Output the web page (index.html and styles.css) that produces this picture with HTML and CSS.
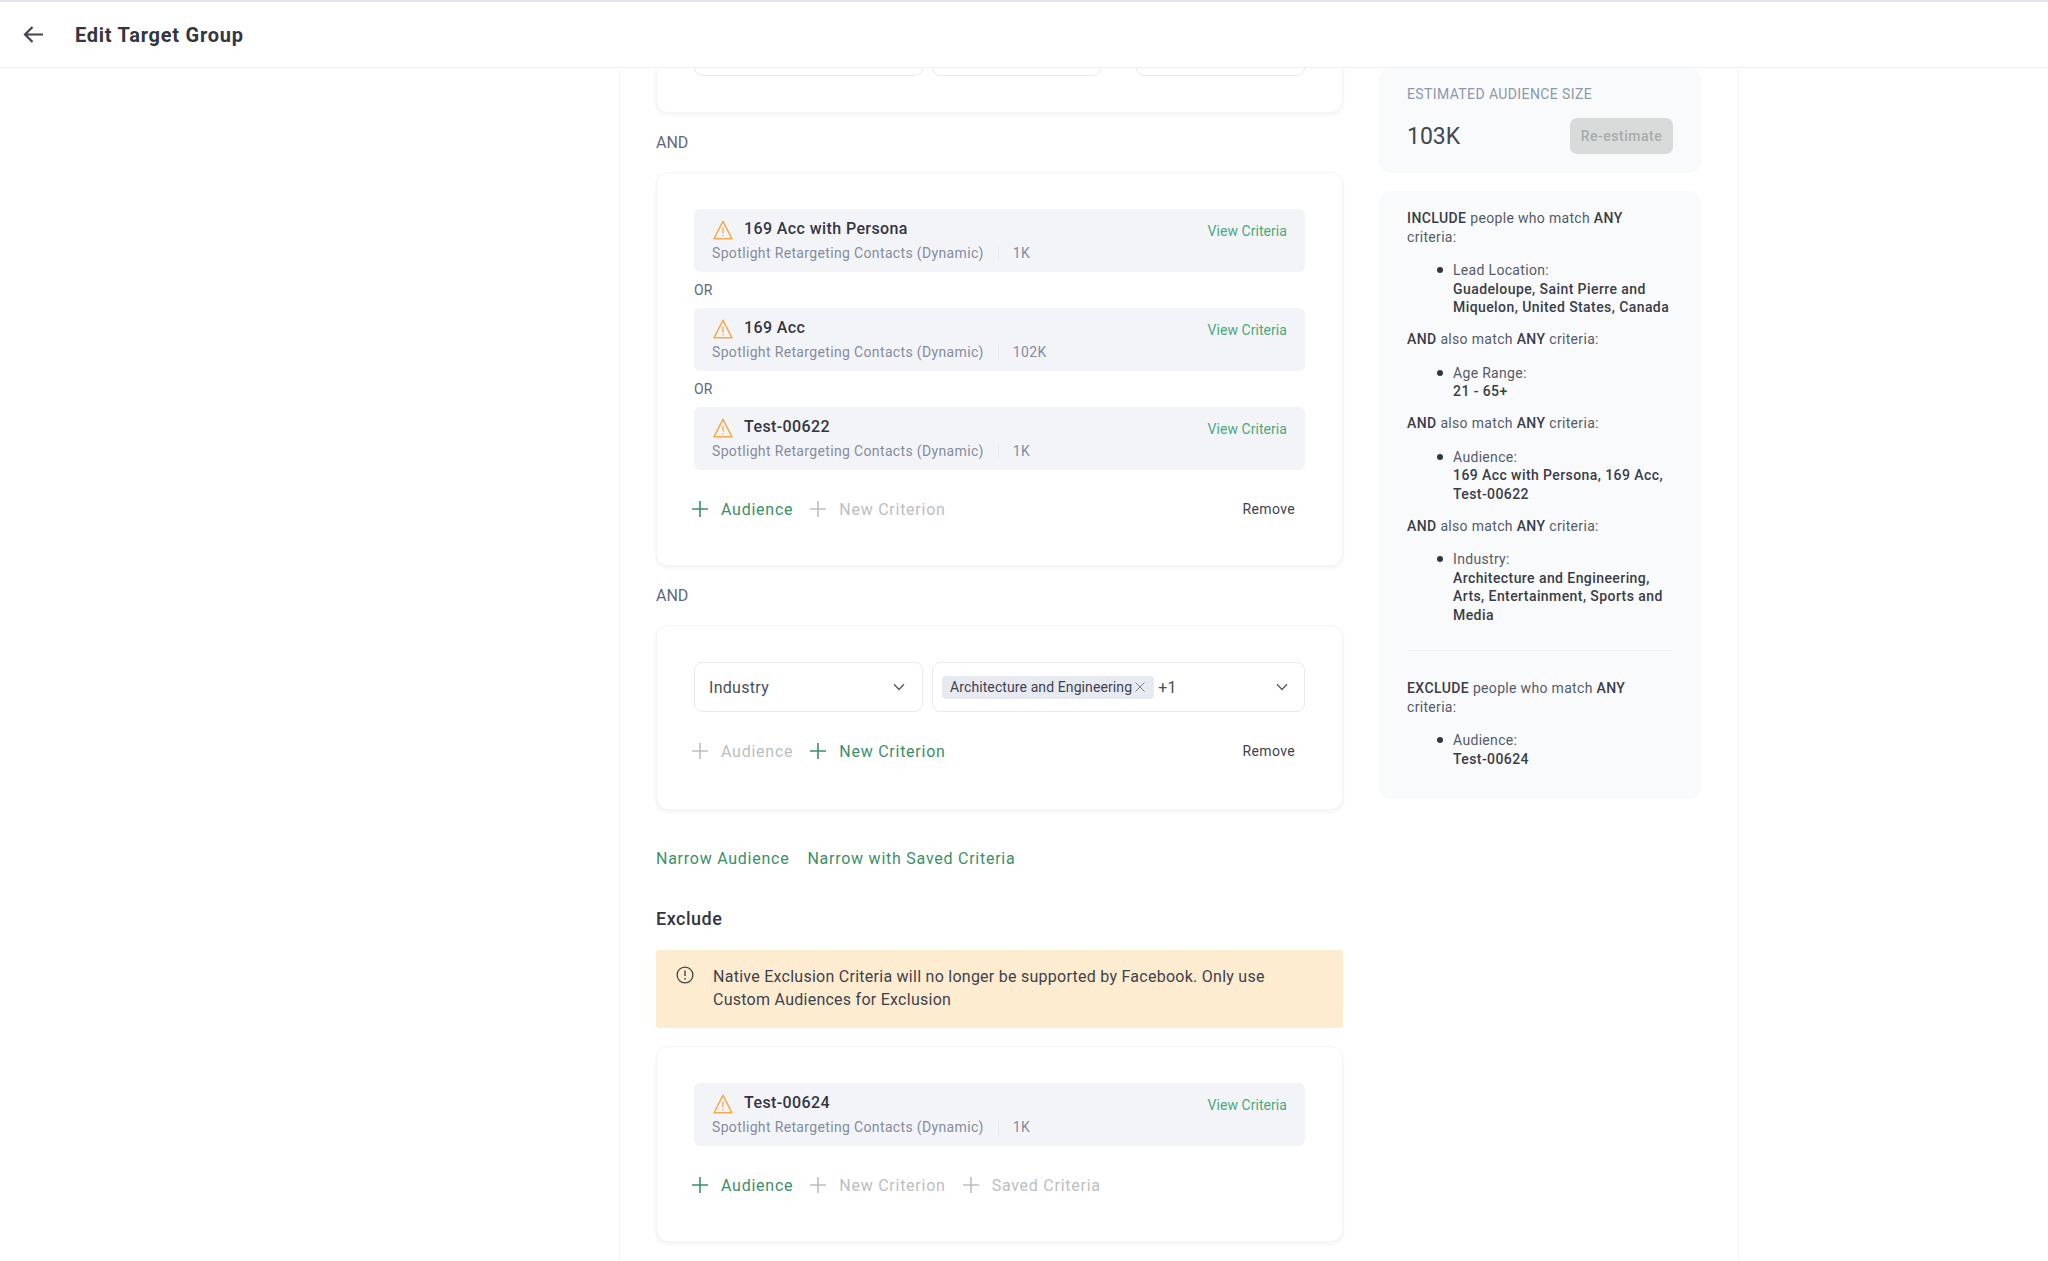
FILE: index.html
```html
<!DOCTYPE html>
<html lang="en">
<head>
<meta charset="UTF-8">
<meta name="viewport" content="width=device-width, initial-scale=1.0">
<title>Edit Target Group</title>
<link rel="stylesheet" href="styles.css">
</head>
<body>

<svg class="sprite" width="0" height="0">
  <symbol id="i-plus" viewBox="0 0 16 16">
    <path d="M8 0v16M0 8h16" fill="none" stroke="currentColor" stroke-width="1.6"/>
  </symbol>
  <symbol id="i-warn" viewBox="0 0 20 20">
    <path d="M10 1.4 1 18.8h18z" fill="none" stroke="#f5a94a" stroke-width="1.5" stroke-linejoin="round"/>
    <path d="M10 7.5v6" stroke="#f5a94a" stroke-width="1.3"/>
    <circle cx="10" cy="15.8" r=".8" fill="#f5a94a"/>
  </symbol>
  <symbol id="i-chevron" viewBox="0 0 12 8">
    <path d="M1 1.2 6 6.4l5-5.2" fill="none" stroke="currentColor" stroke-width="1.4"/>
  </symbol>
</svg>

<header class="topbar">
  <svg class="back" width="20" height="17" viewBox="0 0 20 17">
    <path d="M20 8.5H2M9.5 1 2 8.5 9.5 16" fill="none" stroke="#42454f" stroke-width="2.2"/>
  </svg>
  <h1 class="topbar-title">Edit Target Group</h1>
</header>

<main class="shell">
  <div class="layout">
    <section class="form">

      <div class="card card-scrolled">
        <div class="select-row">
          <div class="select select-key"></div>
          <div class="select select-small"></div>
          <div class="select select-small select-last"></div>
        </div>
      </div>

      <div class="joiner">AND</div>

      <div class="card">
        <div class="item">
          <div>
            <div class="item-title"><svg class="warn"><use href="#i-warn"/></svg>169 Acc with Persona</div>
            <div class="item-sub"><span>Spotlight Retargeting Contacts (Dynamic)</span><span class="item-size">1K</span></div>
          </div>
          <a class="view-link">View Criteria</a>
        </div>
        <div class="or">OR</div>
        <div class="item">
          <div>
            <div class="item-title"><svg class="warn"><use href="#i-warn"/></svg>169 Acc</div>
            <div class="item-sub"><span>Spotlight Retargeting Contacts (Dynamic)</span><span class="item-size">102K</span></div>
          </div>
          <a class="view-link">View Criteria</a>
        </div>
        <div class="or">OR</div>
        <div class="item">
          <div>
            <div class="item-title"><svg class="warn"><use href="#i-warn"/></svg>Test-00622</div>
            <div class="item-sub"><span>Spotlight Retargeting Contacts (Dynamic)</span><span class="item-size">1K</span></div>
          </div>
          <a class="view-link">View Criteria</a>
        </div>
        <div class="actions">
          <a class="add"><svg class="plus"><use href="#i-plus"/></svg>Audience</a>
          <a class="add off"><svg class="plus"><use href="#i-plus"/></svg>New Criterion</a>
          <a class="remove">Remove</a>
        </div>
      </div>

      <div class="joiner">AND</div>

      <div class="card card-industry">
        <div class="select-row">
          <div class="select select-key">
            <span>Industry</span>
            <svg class="chevron"><use href="#i-chevron"/></svg>
          </div>
          <div class="select select-wide">
            <span class="chip">Architecture and Engineering
              <svg class="chip-x" width="10" height="10" viewBox="0 0 10 10"><path d="M.5.5l9 9M9.5.5l-9 9" stroke="#7b8190" stroke-width="1"/></svg>
            </span>
            <span class="more">+1</span>
            <svg class="chevron"><use href="#i-chevron"/></svg>
          </div>
        </div>
        <div class="actions">
          <a class="add off"><svg class="plus"><use href="#i-plus"/></svg>Audience</a>
          <a class="add"><svg class="plus"><use href="#i-plus"/></svg>New Criterion</a>
          <a class="remove">Remove</a>
        </div>
      </div>

      <div class="narrow-links">
        <a>Narrow Audience</a>
        <a>Narrow with Saved Criteria</a>
      </div>

      <h2 class="section-title">Exclude</h2>

      <div class="notice">
        <svg class="notice-icon" width="18" height="18" viewBox="0 0 18 18">
          <circle cx="9" cy="9" r="7.9" fill="none" stroke="#3f424c" stroke-width="1.3"/>
          <path d="M9 4.5v5.6" stroke="#3f424c" stroke-width="1.4"/>
          <circle cx="9" cy="12.8" r=".9" fill="#3f424c"/>
        </svg>
        <p>Native Exclusion Criteria will no longer be supported by Facebook. Only use Custom Audiences for Exclusion</p>
      </div>

      <div class="card">
        <div class="item">
          <div>
            <div class="item-title"><svg class="warn"><use href="#i-warn"/></svg>Test-00624</div>
            <div class="item-sub"><span>Spotlight Retargeting Contacts (Dynamic)</span><span class="item-size">1K</span></div>
          </div>
          <a class="view-link">View Criteria</a>
        </div>
        <div class="actions">
          <a class="add"><svg class="plus"><use href="#i-plus"/></svg>Audience</a>
          <a class="add off"><svg class="plus"><use href="#i-plus"/></svg>New Criterion</a>
          <a class="add off"><svg class="plus"><use href="#i-plus"/></svg>Saved Criteria</a>
        </div>
      </div>

    </section>

    <aside class="side">
      <div class="side-card estimate">
        <div class="estimate-label">ESTIMATED AUDIENCE SIZE</div>
        <div class="estimate-row">
          <span class="estimate-value">103K</span>
          <button class="estimate-btn">Re-estimate</button>
        </div>
      </div>

      <div class="side-card summary">
        <p><b>INCLUDE</b> people who match <b>ANY</b> criteria:</p>
        <ul><li>Lead Location:<br><b>Guadeloupe, Saint Pierre and Miquelon, United States, Canada</b></li></ul>
        <p><b>AND</b> also match <b>ANY</b> criteria:</p>
        <ul><li>Age Range:<br><b>21 - 65+</b></li></ul>
        <p><b>AND</b> also match <b>ANY</b> criteria:</p>
        <ul><li>Audience:<br><b>169 Acc with Persona, 169 Acc, Test-00622</b></li></ul>
        <p><b>AND</b> also match <b>ANY</b> criteria:</p>
        <ul><li>Industry:<br><b>Architecture and Engineering, Arts, Entertainment, Sports and Media</b></li></ul>
        <hr>
        <p><b>EXCLUDE</b> people who match <b>ANY</b> criteria:</p>
        <ul><li>Audience:<br><b>Test-00624</b></li></ul>
      </div>
    </aside>
  </div>
</main>

</body>
</html>
```

FILE: styles.css
```css
html, body {
  height: 100%;
  margin: 0;
  padding: 0;
  overflow: hidden;
  background: #fff;
  font-family: Roboto, 'Noto Sans', sans-serif;
  color: #33363f;
}
.sprite {
  position: absolute;
}

/* top bar */
.topbar {
  position: relative;
  z-index: 2;
  height: 65px;
  display: flex;
  align-items: center;
  background: #fff;
  border-top: 2px solid #e4e4f4;
  border-bottom: 1px solid #eff0f2;
}
.back {
  margin-left: 23px;
}
.topbar-title {
  margin: 0 0 0 32px;
  font-size: 20px;
  font-weight: 700;
  letter-spacing: 0.75px;
  color: #33363f;
}

/* page column */
.shell {
  height: calc(100% - 68px);
  overflow: hidden;
}
.layout {
  width: 1120px;
  height: 100%;
  margin-left: 619px;
  padding: 0 36px;
  box-sizing: border-box;
  display: grid;
  grid-template-columns: 687px 322px;
  gap: 36px;
  border-left: 1px solid #f3f4f6;
  border-right: 1px solid #f3f4f6;
}

/* left form */
.card {
  padding: 36px 37px 40px;
  border: 1px solid #f4f5f7;
  border-radius: 12px;
  background: #fff;
  box-shadow: 0 2px 4px rgba(30, 40, 70, 0.06);
}
.card-scrolled {
  margin-top: -79px;
  padding-bottom: 36px;
}
.card-industry {
  padding-bottom: 42px;
}
.joiner {
  height: 59px;
  line-height: 59px;
  font-size: 16px;
  color: #5f6880;
}
.select-row {
  display: flex;
  gap: 9px;
}
.select {
  height: 50px;
  padding: 0 17px 0 14px;
  box-sizing: border-box;
  display: flex;
  align-items: center;
  justify-content: space-between;
  border: 1px solid #e8eaee;
  border-radius: 8px;
  font-size: 16px;
  letter-spacing: 0.3px;
  color: #4a4e59;
}
.select-key {
  width: 229px;
}
.select-small {
  width: 169px;
}
.select-last {
  margin-left: 26px;
}
.select-wide {
  flex: 1;
  justify-content: flex-start;
  padding-left: 9px;
  padding-right: 16px;
}
.chevron {
  width: 12px;
  height: 8px;
  color: #565b68;
}
.select-wide .chevron {
  margin-left: auto;
}
.chip {
  height: 23px;
  padding: 0 9px 0 8px;
  display: flex;
  align-items: center;
  gap: 3px;
  background: #e8eaf2;
  border-radius: 4px;
  font-size: 14px;
  letter-spacing: 0.1px;
  color: #3e424d;
  white-space: nowrap;
}
.more {
  margin-left: 4px;
  font-size: 16px;
}
.item {
  height: 63px;
  padding: 8px 18px 0;
  box-sizing: border-box;
  display: flex;
  justify-content: space-between;
  background: #f3f4f8;
  border-radius: 6px;
}
.item-title {
  height: 22px;
  display: flex;
  align-items: center;
  font-size: 16px;
  font-weight: 500;
  letter-spacing: 0.4px;
  color: #33363f;
}
.warn {
  width: 20px;
  height: 20px;
  margin: 3px 11px 0 1px;
}
.item-sub {
  height: 20px;
  margin-top: 4px;
  display: flex;
  align-items: center;
  font-size: 14px;
  letter-spacing: 0.35px;
  color: #858c9f;
}
.item-size {
  margin-left: 14px;
  padding-left: 14px;
  border-left: 1px solid #e9eaef;
}
.view-link {
  margin-top: 5px;
  font-size: 14px;
  line-height: 18px;
  letter-spacing: 0.05px;
  color: #4aa97d;
}
.or {
  height: 36px;
  line-height: 36px;
  font-size: 14px;
  letter-spacing: 0.1px;
  color: #5f6880;
}
.actions {
  height: 32px;
  margin: 23px 10px 0 -2px;
  display: flex;
  align-items: center;
  gap: 17px;
}
.add {
  display: flex;
  align-items: center;
  gap: 13px;
  font-size: 16px;
  letter-spacing: 0.75px;
  color: #3b8f68;
}
.add.off {
  color: #bcbec1;
}
.plus {
  width: 16px;
  height: 16px;
}
.remove {
  margin-left: auto;
  font-size: 14px;
  letter-spacing: 0.35px;
  color: #3e424d;
}
.narrow-links {
  height: 24px;
  margin-top: 36px;
  display: flex;
  align-items: center;
  gap: 18px;
  font-size: 16px;
  letter-spacing: 0.75px;
  color: #3b8f68;
}
.section-title {
  height: 26px;
  margin: 36px 0 18px;
  font-size: 18px;
  font-weight: 500;
  line-height: 26px;
  letter-spacing: 0.5px;
  color: #33363f;
}
.notice {
  height: 78px;
  margin-bottom: 18px;
  padding: 15px 56px 0 20px;
  box-sizing: border-box;
  display: flex;
  align-items: flex-start;
  gap: 19px;
  background: #feecd0;
  border-radius: 3px;
}
.notice-icon {
  flex: none;
  margin-top: 1px;
}
.notice p {
  margin: 0;
  font-size: 16px;
  line-height: 23px;
  letter-spacing: 0.26px;
  color: #3e424d;
}

/* right column */
.side-card {
  width: 322px;
  box-sizing: border-box;
  padding: 0 28px;
  background: #f9fafc;
  border-radius: 12px;
}
.estimate {
  height: 105px;
  padding-top: 17px;
  margin-bottom: 18px;
}
.estimate-label {
  font-size: 14px;
  line-height: 18px;
  letter-spacing: 0.39px;
  color: #8c98ab;
}
.estimate-row {
  margin-top: 15px;
  display: flex;
  align-items: center;
  justify-content: space-between;
}
.estimate-value {
  font-size: 23px;
  color: #44474f;
}
.estimate-btn {
  width: 103px;
  height: 36px;
  padding: 0;
  border: 0;
  border-radius: 7px;
  background: #d9dbdb;
  font-family: inherit;
  font-size: 14px;
  font-weight: 500;
  letter-spacing: 0.5px;
  color: #a6abae;
}
.summary {
  height: 608px;
  padding-top: 18px;
  font-size: 14px;
  line-height: 18.5px;
  letter-spacing: 0.32px;
  color: #555a66;
}
.summary p {
  margin: 0 0 15px;
}
.summary b {
  font-weight: 500;
  letter-spacing: 0.42px;
  color: #3a3d46;
}
.summary ul {
  margin: 0 0 13.5px;
  padding-left: 46px;
  list-style: none;
}
.summary li {
  position: relative;
}
.summary li::before {
  content: '';
  position: absolute;
  left: -16px;
  top: 6px;
  width: 6px;
  height: 6px;
  border-radius: 50%;
  background: #33363f;
}
.summary hr {
  height: 1px;
  margin: 26px 0 28px;
  border: 0;
  background: #f0f1f4;
}
```
